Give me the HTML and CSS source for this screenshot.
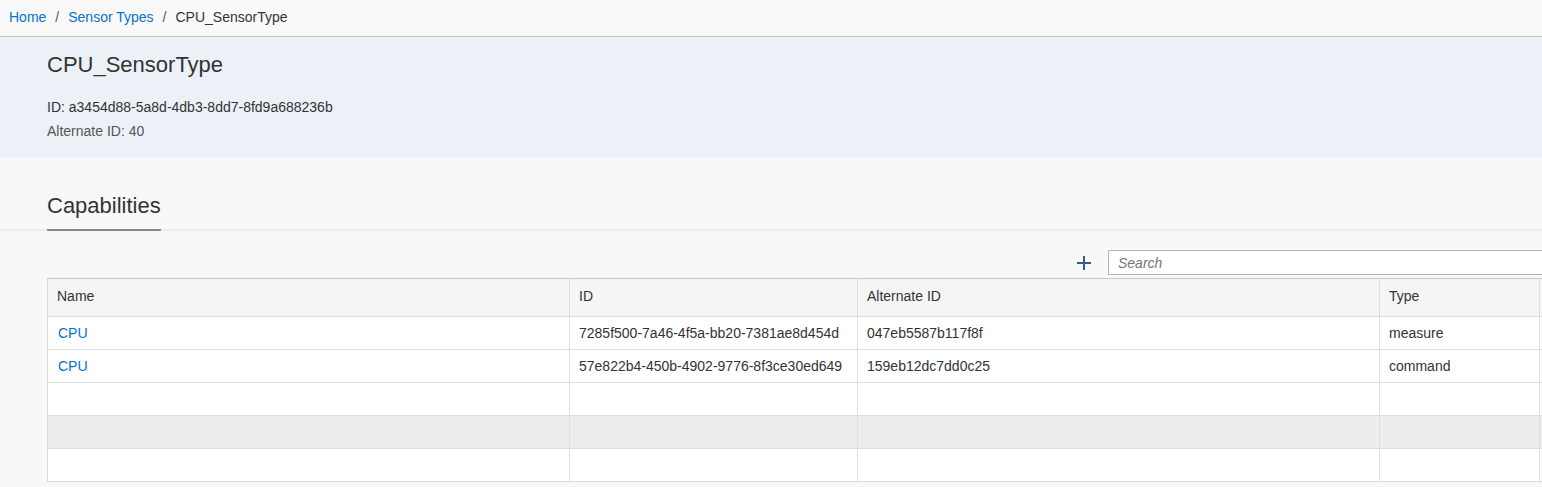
FILE: index.html
```html
<!DOCTYPE html>
<html lang="en">
<head>
<meta charset="utf-8">
<title>CPU_SensorType</title>
<link rel="stylesheet" href="styles.css">
</head>
<body>
<nav class="crumbs">
  <a class="crumb-link" href="#">Home</a><span class="sep">/</span><a class="crumb-link" href="#">Sensor Types</a><span class="sep">/</span><span class="crumb-current">CPU_SensorType</span>
</nav>
<header class="summary">
  <h1 class="title">CPU_SensorType</h1>
  <div class="meta meta-id">ID: a3454d88-5a8d-4db3-8dd7-8fd9a688236b</div>
  <div class="meta meta-alt">Alternate ID: 40</div>
</header>
<div class="tabs">
  <div class="tab">Capabilities</div>
</div>
<section class="content">
  <div class="toolbar">
    <button class="add-btn" type="button" aria-label="Add">
      <svg width="16" height="16" viewBox="0 0 16 16"><path d="M8 1v14M1 8h14" stroke="#2f5e8e" stroke-width="2" fill="none"/></svg>
    </button>
    <input class="search" type="text" placeholder="Search">
  </div>
  <div class="grid">
    <div class="row head">
      <div class="cell">Name</div>
      <div class="cell">ID</div>
      <div class="cell">Alternate ID</div>
      <div class="cell">Type</div>
      <div class="cell"></div>
    </div>
    <div class="row">
      <div class="cell"><a class="link" href="#">CPU</a></div>
      <div class="cell">7285f500-7a46-4f5a-bb20-7381ae8d454d</div>
      <div class="cell">047eb5587b117f8f</div>
      <div class="cell">measure</div>
      <div class="cell"></div>
    </div>
    <div class="row">
      <div class="cell"><a class="link" href="#">CPU</a></div>
      <div class="cell">57e822b4-450b-4902-9776-8f3ce30ed649</div>
      <div class="cell">159eb12dc7dd0c25</div>
      <div class="cell">command</div>
      <div class="cell"></div>
    </div>
    <div class="row">
      <div class="cell"></div><div class="cell"></div><div class="cell"></div><div class="cell"></div><div class="cell"></div>
    </div>
    <div class="row shaded">
      <div class="cell"></div><div class="cell"></div><div class="cell"></div><div class="cell"></div><div class="cell"></div>
    </div>
    <div class="row">
      <div class="cell"></div><div class="cell"></div><div class="cell"></div><div class="cell"></div><div class="cell"></div>
    </div>
  </div>
</section>
</body>
</html>
```
FILE: styles.css
```css
* { box-sizing: border-box; }
html, body { margin: 0; padding: 0; }
body {
  background: #f8f8f8;
  font-family: "Liberation Sans", Arial, sans-serif;
  font-size: 14px;
  color: #333;
  overflow: hidden;
  width: 1542px;
}
a { text-decoration: none; }

.crumbs {
  height: 37px;
  line-height: 35px;
  padding-left: 9px;
  background: #f9f9f9;
  border-bottom: 1px solid #c2c2c2;
  white-space: nowrap;
}
.crumb-link { color: #0572ce; }
.crumb-current { color: #333; }
.sep { color: #555; padding: 0 9px 0 9px; }

.summary {
  background: #ecf1f8;
  padding: 13px 0 15px 47px;
}
.title {
  margin: 0;
  font-size: 22px;
  font-weight: normal;
  line-height: 30px;
  color: #333;
}
.meta { line-height: 24px; }
.meta-id { margin-top: 15px; color: #333; }
.meta-alt { color: #555; }

.tabs {
  padding: 33px 0 0 47px;
  border-bottom: 2px solid #ececec;
  height: 73px;
  display: flex;
}
.tab {
  font-size: 22px;
  line-height: 30px;
  padding-bottom: 8px;
  border-bottom: 2px solid #8a8a8a;
  height: 40px;
  color: #333;
}

.content {
  margin-left: 47px;
  width: 1600px;
  padding-top: 19px;
}
.toolbar {
  display: flex;
  justify-content: flex-end;
  align-items: center;
  gap: 12px;
  height: 25px;
  margin-bottom: 3px;
}
.add-btn {
  width: 24px;
  height: 24px;
  padding: 0;
  border: 0;
  background: transparent;
  display: flex;
  align-items: center;
  justify-content: center;
}
.search {
  width: 539px;
  height: 25px;
  border: 1px solid #b4b4b4;
  background: #fff;
  padding: 0 9px;
  font-family: "Liberation Sans", Arial, sans-serif;
  font-size: 14px;
  color: #333;
}
.search::placeholder { color: #777; font-style: italic; }

.grid {
  border-top: 1px solid #c6c6c6;
  border-left: 1px solid #dadada;
  background: #fff;
}
.row {
  display: grid;
  grid-template-columns: 522px 288px 522px 160px 1fr;
  height: 33px;
  border-bottom: 1px solid #dedede;
}
.row.head {
  height: 38px;
  background: #f5f5f5;
}
.row.head .cell { padding-bottom: 3px; }
.row.shaded { background: #ededed; }
.cell {
  border-right: 1px solid #dedede;
  padding-left: 9px;
  display: flex;
  align-items: center;
  white-space: nowrap;
  color: #333;
}
.link { color: #0572ce; padding-left: 1px; }
```
